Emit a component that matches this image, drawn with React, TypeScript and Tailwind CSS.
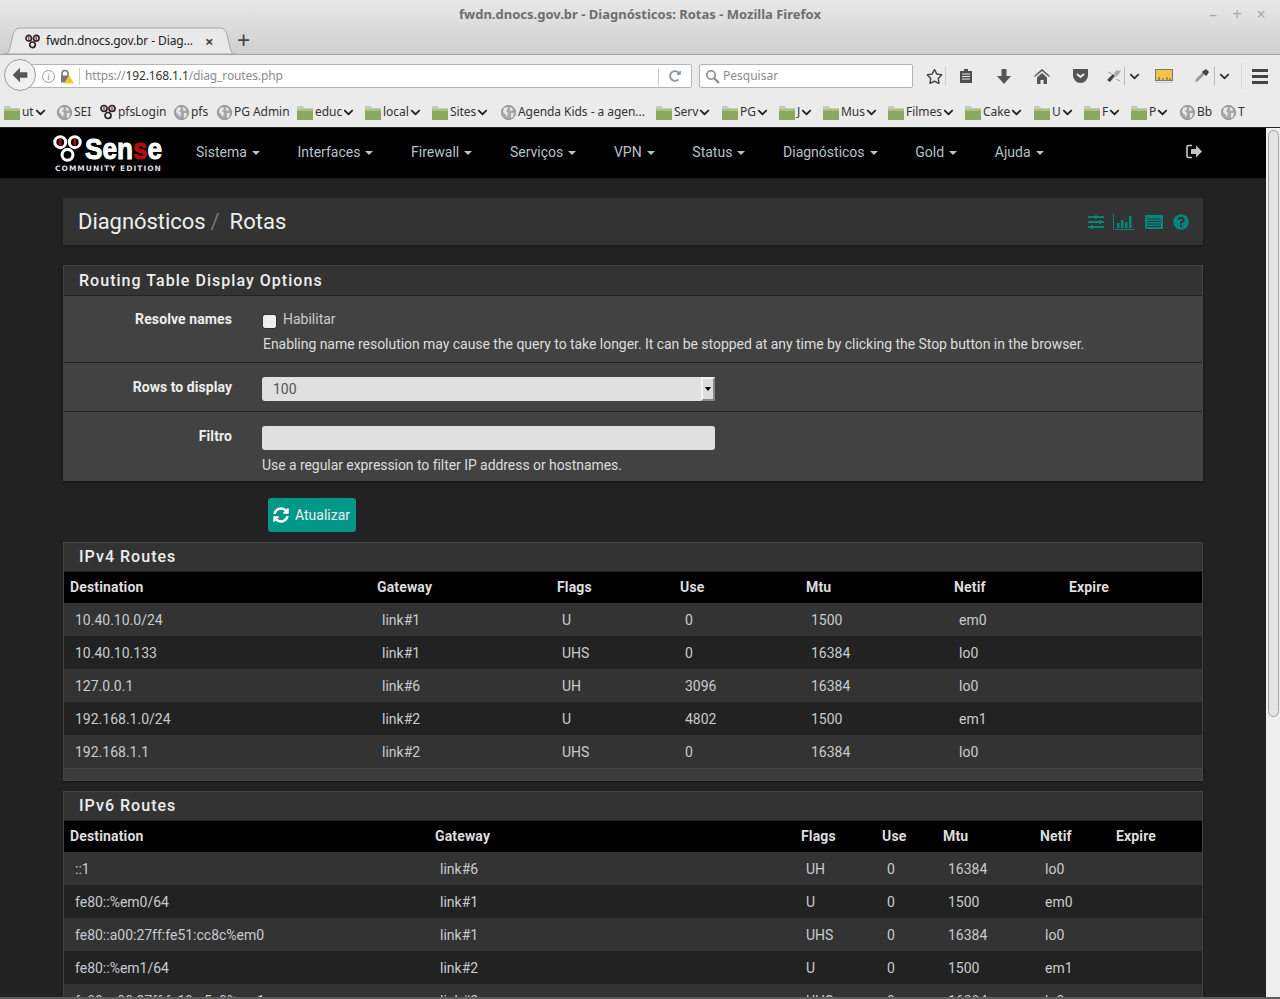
import React from "react";
import { FaSlidersH, FaQuestionCircle, FaSyncAlt, FaRegStar, FaChevronDown, FaRedoAlt } from "react-icons/fa";

const bookmarks = [
  { label: "ut", kind: "folder", w: "w-[53px]" },
  { label: "SEI", kind: "globe", w: "w-[43px]" },
  { label: "pfsLogin", kind: "pf", w: "w-[74px]" },
  { label: "pfs", kind: "globe", w: "w-[43px]" },
  { label: "PG Admin", kind: "globe", w: "w-[80px]" },
  { label: "educ", kind: "folder", w: "w-[68px]" },
  { label: "local", kind: "folder", w: "w-[67px]" },
  { label: "Sites", kind: "folder", w: "w-[69px]" },
  { label: "Agenda Kids - a agen...", kind: "globe", w: "w-[155px]" },
  { label: "Serv", kind: "folder", w: "w-[66px]" },
  { label: "PG", kind: "folder", w: "w-[57px]" },
  { label: "J", kind: "folder", w: "w-[44px]" },
  { label: "Mus", kind: "folder", w: "w-[65px]" },
  { label: "Filmes", kind: "folder", w: "w-[77px]" },
  { label: "Cake", kind: "folder", w: "w-[69px]" },
  { label: "U", kind: "folder", w: "w-[50px]" },
  { label: "F", kind: "folder", w: "w-[47px]" },
  { label: "P", kind: "folder", w: "w-[49px]" },
  { label: "Bb", kind: "globe", w: "w-[41px]" },
  { label: "T", kind: "globe", w: "w-[40px]" },
];

const menu = ["Sistema", "Interfaces", "Firewall", "Serviços", "VPN", "Status", "Diagnósticos", "Gold", "Ajuda"];

const ipv4Cols = ["w-[307px]", "w-[180px]", "w-[123px]", "w-[126px]", "w-[148px]", "w-[115px]", "w-[139px]"];
const ipv6Cols = ["w-[365px]", "w-[366px]", "w-[81px]", "w-[61px]", "w-[97px]", "w-[76px]", "w-[92px]"];

const ipv4Rows = [
  ["10.40.10.0/24", "link#1", "U", "0", "1500", "em0", ""],
  ["10.40.10.133", "link#1", "UHS", "0", "16384", "lo0", ""],
  ["127.0.0.1", "link#6", "UH", "3096", "16384", "lo0", ""],
  ["192.168.1.0/24", "link#2", "U", "4802", "1500", "em1", ""],
  ["192.168.1.1", "link#2", "UHS", "0", "16384", "lo0", ""],
];

const ipv6Rows = [
  ["::1", "link#6", "UH", "0", "16384", "lo0", ""],
  ["fe80::%em0/64", "link#1", "U", "0", "1500", "em0", ""],
  ["fe80::a00:27ff:fe51:cc8c%em0", "link#1", "UHS", "0", "16384", "lo0", ""],
  ["fe80::%em1/64", "link#2", "U", "0", "1500", "em1", ""],
  ["fe80::a00:27ff:fe19:e5c0%em1", "link#2", "UHS", "0", "16384", "lo0", ""],
];

const headers = ["Destination", "Gateway", "Flags", "Use", "Mtu", "Netif", "Expire"];

function PfRings({ size, color, dot }: { size: number; color: string; dot: string }) {
  return (
    <svg width={size} height={size} viewBox="0 0 32 32" fill="none">
      <circle cx="8" cy="9" r="6" stroke={color} strokeWidth="3.4" />
      <circle cx="24" cy="9" r="6" stroke={color} strokeWidth="3.4" />
      <circle cx="16" cy="23" r="6" stroke={color} strokeWidth="3.4" />
      <rect x="6.6" y="5.5" width="2.8" height="7" fill={dot} />
      <rect x="22.6" y="5.5" width="2.8" height="7" fill={dot} />
    </svg>
  );
}

function Folder() {
  return (
    <svg width="16" height="15" viewBox="0 0 16 15" className="shrink-0">
      <path d="M0 1h6l1 2h9v12H0z" fill="#c9c9bb" />
      <rect x="0" y="4" width="16" height="11" fill="#8aa860" />
      <rect x="0" y="4" width="16" height="2" fill="#a9c283" />
    </svg>
  );
}

function Globe() {
  return (
    <svg width="15" height="15" viewBox="0 0 15 15" className="shrink-0">
      <circle cx="7.5" cy="7.5" r="7" fill="#a8a8a8" stroke="#8a8a8a" />
      <path d="M3 3l3-1 1 2-2 2 2 2-1 4-2-3-2-2zM9 2l3 2-1 2-2-1zM10 8l3 0-1 4-2 1z" fill="#e8e8e8" />
    </svg>
  );
}

function BookmarkIcon({ kind }: { kind: string }) {
  if (kind === "folder") return <Folder />;
  if (kind === "globe") return <Globe />;
  return <PfRings size={16} color="#222" dot="#b03030" />;
}

function BrowserChrome() {
  return (
    <div className="font-['Noto_Sans',sans-serif] shrink-0">
      <div className="h-[55px] bg-gradient-to-b from-[#e8e8e8] to-[#cfcfcf] border-b border-[#a5a5a5]">
        <div className="relative h-[27px] pt-[2px] flex items-center justify-center text-[13px] font-bold text-[#6e6e6e]">
          fwdn.dnocs.gov.br - Diagnósticos: Rotas - Mozilla Firefox
          <div className="absolute right-[7px] top-[2px] flex text-[16px] font-normal text-[#a8a8a8]">
            <span className="w-[24px] text-center">–</span>
            <span className="w-[24px] text-center">+</span>
            <span className="w-[24px] text-center">×</span>
          </div>
        </div>
        <div className="flex items-center h-[27px]">
          <div className="relative w-[232px] h-[28px] ml-[4px] mt-px">
            <svg className="absolute inset-0" width="232" height="28" viewBox="0 0 232 28">
              <path
                d="M0 27c4 0 5-2 6-7l3-12c1-5 3-7 8-7h198c5 0 7 2 8 7l3 12c1 5 2 7 6 7z"
                fill="#e9e9e9"
                stroke="#a5a5a5"
              />
            </svg>
            <div className="relative flex items-center h-full pl-[21px] text-[12px] tracking-[-0.1px] text-[#222]">
              <PfRings size={15} color="#222" dot="#b03030" />
              <span className="ml-[6px] w-[150px]">fwdn.dnocs.gov.br - Diag...</span>
              <span className="ml-[9px] text-[15px] font-bold text-[#444]">×</span>
            </div>
          </div>
          <span className="ml-px text-[23px] leading-none text-[#444]">+</span>
        </div>
      </div>

      <div className="h-[40px] pt-[2px] bg-[#ebebeb] flex items-center text-[12px]">
        <div className="relative z-10 ml-[4px] -mt-[2px] w-[32px] h-[32px] rounded-full bg-[#f0f0f0] border border-[#9c9c9c] flex items-center justify-center">
          <svg width="18" height="18" viewBox="0 0 16 16">
            <path d="M8 1.5L1.5 8 8 14.5V10.5h6.5v-5H8z" fill="#555" />
          </svg>
        </div>
        <div className="-ml-[11px] w-[667px] h-[24px] pl-[14px] bg-white border border-[#b4b4b4] rounded-[2px] flex items-center">
          <div className="w-[13px] h-[13px] ml-[2px] rounded-full border border-[#999] text-[9px] leading-[11px] text-center text-[#888]">
            i
          </div>
          <svg width="15" height="15" viewBox="0 0 15 15" className="ml-[4px]">
            <path d="M3 7V4.5a3 3 0 0 1 6 0V7" stroke="#777" strokeWidth="1.6" fill="none" />
            <rect x="2" y="6.5" width="8" height="7" fill="#777" />
            <path d="M10 6l5 8.5H5z" fill="#f4c430" />
          </svg>
          <div className="ml-[5px] w-px h-[17px] bg-[#ccc]" />
          <span className="ml-[5px] tracking-[-0.12px] text-[#8c8c8c]">
            https://<span className="text-[#333]">192.168.1.1</span>/diag_routes.php
          </span>
          <div className="ml-auto w-px h-[17px] bg-[#ccc]" />
          <div className="w-[32px] flex justify-center">
            <FaRedoAlt size={12} color="#8a9aa8" />
          </div>
        </div>
        <div className="ml-[7px] w-[214px] h-[24px] bg-white border border-[#b4b4b4] rounded-[2px] flex items-center pl-[5px] text-[#8c8c8c]">
          <svg width="15" height="15" viewBox="0 0 15 15" fill="none" stroke="#888" strokeWidth="1.6">
            <circle cx="6" cy="6" r="4.2" />
            <path d="M9 9l5 5" strokeWidth="2.2" />
          </svg>
          <span className="ml-[3px]">Pesquisar</span>
        </div>
        <FaRegStar size={17} color="#444" className="ml-[13px]" />
        <div className="ml-[2px] w-px h-[18px] bg-[#ccc]" />
        <svg width="14" height="16" viewBox="0 0 14 16" className="ml-[13px]">
          <path d="M5 1h4v2h4v12H1V3h4z" fill="#4d4d4d" />
          <path d="M3 6h8M3 8.5h8M3 11h8" stroke="#eee" />
        </svg>
        <svg width="14" height="16" viewBox="0 0 14 16" className="ml-[24px]">
          <path d="M4.5 1h5v7H14l-7 8-7-8h4.5z" fill="#555" />
        </svg>
        <svg width="18" height="17" viewBox="0 0 18 17" className="ml-[22px]">
          <path d="M9 1L0.5 8.5h2L9 3l6.5 5.5h2z" fill="#555" />
          <path d="M9 5l-5 4.5V16h3.5v-4h3v4H14V9.5z" fill="#555" />
        </svg>
        <svg width="17" height="16" viewBox="0 0 17 16" className="ml-[21px]">
          <path d="M1 1h15v6.5a7.5 7.5 0 0 1-15 0z" fill="#555" />
          <path d="M5 6l3.5 3L12 6" stroke="#eee" strokeWidth="2" fill="none" />
        </svg>
        <svg width="16" height="14" viewBox="0 0 16 14" className="ml-[17px]">
          <path d="M1 11L7 5l2 2-5 6z" fill="#444" />
          <path d="M8 4l3-3 1 1 3-1-2 4-3 3-1-2z" fill="#aaa" />
          <path d="M2 3l4 2M10 10l4 2" stroke="#999" />
        </svg>
        <div className="ml-[2px] w-px h-[18px] bg-[#bbb]" />
        <FaChevronDown size={11} color="#333" className="ml-[4px]" />
        <svg width="18" height="14" viewBox="0 0 18 14" className="ml-[15px]">
          <rect x="0.5" y="0.5" width="17" height="11" fill="#f2c54a" stroke="#777" />
          <path d="M4 11V8M8 11V9M12 11V8M15 11V9" stroke="#555" />
          <rect y="13" width="18" height="1" fill="#ccc" />
        </svg>
        <svg width="18" height="16" viewBox="0 0 18 16" className="ml-[20px]">
          <path d="M2 14l1-3 7-7 2 2-7 7z" fill="#999" />
          <path d="M10 3l3-2 3 3-2 3-1 1-4-4z" fill="#444" />
        </svg>
        <div className="ml-[3px] w-px h-[18px] bg-[#bbb]" />
        <FaChevronDown size={11} color="#333" className="ml-[4px]" />
        <div className="ml-[11px] w-px h-[26px] bg-[#d8d8d8]" />
        <div className="ml-[10px] flex flex-col gap-[3px]">
          <div className="w-[16px] h-[3px] bg-[#444]" />
          <div className="w-[16px] h-[3px] bg-[#444]" />
          <div className="w-[16px] h-[3px] bg-[#444]" />
        </div>
      </div>

      <div className="h-[33px] pt-[2px] bg-[#ebebeb] border-b border-[#222] flex items-center pl-[4px] text-[12px] tracking-[-0.05px] text-[#333]">
        {bookmarks.map((b) => (
          <div key={b.label + b.w} className={`${b.w} shrink-0 flex items-center`}>
            <BookmarkIcon kind={b.kind} />
            <span className="ml-[2px]">{b.label}</span>
            {b.kind === "folder" && <FaChevronDown size={11} color="#222" className="ml-px" />}
          </div>
        ))}
      </div>
    </div>
  );
}

function Navbar() {
  return (
    <div className="h-[51px] shrink-0 bg-black border-b border-[#1c1c1c] flex items-center">
      <div className="ml-[53px] w-[110px] h-[40px] relative">
        <div className="absolute left-0 top-[1px]">
          <PfRings size={29} color="#fff" dot="#c00000" />
        </div>
        <div className="absolute left-[32px] -top-[1px] origin-left scale-x-[0.87] font-['Liberation_Sans',sans-serif] font-bold text-[30px] leading-[34px] text-white [-webkit-text-stroke:1px_#fff]">
          Sen<span className="text-[#b01010] [-webkit-text-stroke:1px_#b01010]">s</span>e
        </div>
        <div className="absolute left-[2px] top-[30px] font-['DejaVu_Sans',sans-serif] font-bold text-[7.5px] tracking-[1px] text-[#ddd] whitespace-nowrap">
          COMMUNITY EDITION
        </div>
      </div>
      <div className="ml-[33px] -mt-[2px] flex gap-[37.7px] font-['Roboto',sans-serif] text-[14px] text-[#b8c0c8]">
        {menu.map((m) => (
          <div key={m} className="flex items-center">
            {m}
            <span className="ml-[5px] mt-[1px] border-x-[4px] border-t-[4px] border-x-transparent border-t-[#b8c0c8]" />
          </div>
        ))}
      </div>
      <svg width="17" height="15" viewBox="0 0 17 15" className="ml-[142px] -mt-[3px]">
        <path d="M6 1.5H2.5a1.5 1.5 0 0 0-1.5 1.5v9a1.5 1.5 0 0 0 1.5 1.5H6" stroke="#c8ccd0" strokeWidth="1.6" fill="none" />
        <path d="M5 5h5V1.5L16 7.5l-6 6V10H5z" fill="#c4c4c4" />
      </svg>
    </div>
  );
}

function Breadcrumb() {
  return (
    <div className="h-[47px] bg-[#333] shadow-[0_1px_2px_rgba(0,0,0,0.4)] flex items-center pl-[15px] pr-[14px] text-[#eee]">
      <span className="text-[22px] tracking-[-0.05px]">Diagnósticos</span>
      <span className="text-[22px] text-[#777] ml-[5px]">/</span>
      <span className="text-[22px] ml-[10px]">Rotas</span>
      <div className="ml-auto flex items-center text-[#00897b]">
        <FaSlidersH size={16} />
        <svg width="21" height="16" viewBox="0 0 21 16" className="ml-[9px]">
          <path d="M0.5 0v15.5H21" stroke="#00897b" fill="none" />
          <path d="M4 9h2.5v5H4zM8 6h2.5v8H8zM12 8h2.5v6H12zM16 2h2.5v12H16z" fill="#00897b" />
        </svg>
        <svg width="18" height="14" viewBox="0 0 18 14" className="ml-[11px]">
          <rect width="18" height="14" rx="1" fill="#00897b" />
          <path d="M2 4h14M2 6.5h14M2 9h14M2 11.5h14" stroke="#333" strokeWidth="1" />
        </svg>
        <FaQuestionCircle size={16} className="ml-[10px]" />
      </div>
    </div>
  );
}

function PanelHead({ title, tall }: { title: string; tall?: boolean }) {
  return (
    <div
      className={`${tall ? "h-[30px] pt-px" : "h-[29px]"} pl-[15px] flex items-center bg-[#333] border-b border-[#222] text-[16px] font-medium tracking-[1.03px] text-[#eee]`}
    >
      {title}
    </div>
  );
}

function RouteTable({ title, cols, rows }: { title: string; cols: string[]; rows: string[][] }) {
  return (
    <div className="bg-[#3c3c3c] border border-[#444] shadow-[0_1px_2px_rgba(0,0,0,0.4)] pb-[11px]">
      <PanelHead title={title} />
      <table className="table-fixed w-[1138px] border-collapse text-[14px]">
        <colgroup>
          {cols.map((c, i) => (
            <col key={i} className={c} />
          ))}
        </colgroup>
        <thead>
          <tr className="h-[31px] bg-black">
            {headers.map((h) => (
              <th key={h} className="px-[6px] text-left font-bold tracking-[0.15px] text-[#ddd]">
                {h}
              </th>
            ))}
          </tr>
        </thead>
        <tbody>
          {rows.map((r, i) => (
            <tr key={r[0]} className={`h-[33px] ${i % 2 === 0 ? "bg-[#333]" : "bg-[#222]"}`}>
              {r.map((c, j) => (
                <td key={j} className="px-[11px] pt-[2px] text-[#c8ccd0] whitespace-nowrap">
                  {c}
                </td>
              ))}
            </tr>
          ))}
        </tbody>
      </table>
      <div className="h-px bg-[#444]" />
    </div>
  );
}

function OptionsPanel() {
  return (
    <div className="bg-[#424242] border-t border-x border-[#444] shadow-[0_1px_3px_rgba(0,0,0,0.5)]">
      <PanelHead title="Routing Table Display Options" tall />
      <div className="h-[67px] flex border-b border-[#222] pt-[13px]">
        <div className="w-[168px] text-right font-bold text-[14px] tracking-[0.1px] text-[#eee]">Resolve names</div>
        <div className="ml-[31px] text-[14px] text-[#ccc]">
          <div className="flex items-center">
            <div className="w-[13px] h-[13px] mt-[4px] bg-[#eee] rounded-[2px] outline-1 outline-dotted outline-[#222]" />
            <span className="ml-[7px]">Habilitar</span>
          </div>
          <p className="mt-[4px] tracking-[-0.04px] text-[#ddd]">
            Enabling name resolution may cause the query to take longer. It can be stopped at any time by clicking the Stop button in the browser.
          </p>
        </div>
      </div>
      <div className="h-[49px] flex border-b border-[#222] pt-[14px]">
        <div className="w-[168px] text-right font-bold text-[14px] tracking-[0.05px] text-[#eee]">Rows to display</div>
        <div className="ml-[30px] w-[453px] h-[24px] rounded-[3px] bg-[#e0e0e0] flex items-center pl-[11px] text-[14px] text-[#555]">
          100
          <div className="ml-auto w-[14px] h-[24px] bg-[#ddd] border-t-2 border-l-2 border-[#f4f4f4] border-r-2 border-b-2 border-r-[#888] border-b-[#888] flex items-center justify-center">
            <span className="border-x-[3px] border-t-[4px] border-x-transparent border-t-black" />
          </div>
        </div>
      </div>
      <div className="h-[69px] pt-[14px] flex">
        <div className="w-[168px] text-right font-bold text-[14px] tracking-[0.1px] text-[#eee]">Filtro</div>
        <div className="ml-[30px]">
          <div className="w-[453px] h-[24px] rounded-[3px] bg-[#e0e0e0]" />
          <p className="mt-[5px] text-[14px] tracking-[-0.06px] text-[#ddd]">Use a regular expression to filter IP address or hostnames.</p>
        </div>
      </div>
    </div>
  );
}

export default function App() {
  return (
    <div className="w-[1280px] h-[999px] overflow-hidden flex flex-col bg-[#222]">
      <BrowserChrome />
      <div className="flex-1 min-h-0 flex">
        <div className="w-[1266px] flex flex-col min-h-0 overflow-hidden">
          <Navbar />
          <div className="flex-1 min-h-0 overflow-hidden bg-[#222] px-[63px] pt-[19px] font-['Roboto',sans-serif]">
            <Breadcrumb />
            <div className="mt-[20px]">
              <OptionsPanel />
            </div>
            <button className="mt-[17px] ml-[205px] w-[88px] h-[34px] rounded-[3px] bg-[#009688] text-[#f0f0f0] text-[14px] flex items-center pl-[5px]">
              <FaSyncAlt size={16} color="#fff" />
              <span className="ml-[6px]">Atualizar</span>
            </button>
            <div className="mt-[10px]">
              <RouteTable title="IPv4 Routes" cols={ipv4Cols} rows={ipv4Rows} />
            </div>
            <div className="mt-[10px]">
              <RouteTable title="IPv6 Routes" cols={ipv6Cols} rows={ipv6Rows} />
            </div>
          </div>
        </div>
        <div className="w-[14px] bg-[#efefef] pt-[2px] px-[1px]">
          <div className="w-[11px] h-[587px] ml-px rounded-full bg-[#e4e4e4] border border-[#a0a0a0]" />
        </div>
      </div>
      <div className="h-[2px] shrink-0 bg-[#5c5c5c]" />
    </div>
  );
}
